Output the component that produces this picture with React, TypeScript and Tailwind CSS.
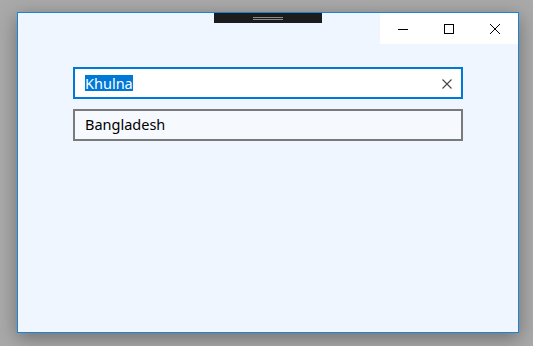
export default function App() {
  return (
    <main className="h-[346px] w-[533px] overflow-hidden bg-[#a9a9a9] pl-[17px] pt-[12px] font-['Segoe_UI','Noto_Sans',sans-serif]">
      <section className="relative h-[321px] w-[502px] border border-[#1883d7] bg-[#eff6ff] shadow-[0_5px_18px_rgba(0,0,0,0.35)]">
        {/* drag handle */}
        <div className="absolute left-[196px] top-0 flex h-[10px] w-[108px] flex-col items-center justify-center gap-[1px] bg-[#1c1c1c]">
          <span className="block h-px w-[30px] bg-[#8a8a8a]" />
          <span className="block h-px w-[30px] bg-[#8a8a8a]" />
        </div>

        {/* caption buttons */}
        <div className="absolute right-0 top-0 flex h-[31px] w-[138px] bg-white">
          <div className="flex w-[46px] items-center justify-center">
            <svg width="10" height="10" viewBox="0 0 10 10" shapeRendering="crispEdges">
              <path d="M0 5.5H10" stroke="#000" strokeWidth="1" />
            </svg>
          </div>
          <div className="flex w-[46px] items-center justify-center">
            <svg width="10" height="10" viewBox="0 0 10 10" shapeRendering="crispEdges">
              <rect x="0.5" y="0.5" width="9" height="9" fill="none" stroke="#000" strokeWidth="1" />
            </svg>
          </div>
          <div className="flex w-[46px] items-center justify-center">
            <svg width="10" height="10" viewBox="0 0 10 10">
              <path d="M0 0L10 10M10 0L0 10" stroke="#000" strokeWidth="1" />
            </svg>
          </div>
        </div>

        <div className="flex flex-col gap-[10px] pl-[55px] pt-[54px]">
          <div className="flex h-[32px] w-[390px] items-center border-2 border-[#0078d7] bg-white pl-[10px] pr-[8px] text-[14.5px] text-black">
            <span className="bg-[#0078d7] leading-[16px] text-white">Khulna</span>
            <span className="flex-1" />
            <svg width="10" height="10" viewBox="0 0 10 10" className="mr-[1px] mt-[1px]">
              <path d="M0.5 0.5L9.5 9.5M9.5 0.5L0.5 9.5" stroke="#444" strokeWidth="1.1" />
            </svg>
          </div>
          <div className="flex h-[32px] w-[390px] items-center border-2 border-[#7a7a7a] bg-[#f6faff] pl-[10px] text-[14.5px] text-black">
            Bangladesh
          </div>
        </div>
      </section>
    </main>
  );
}
